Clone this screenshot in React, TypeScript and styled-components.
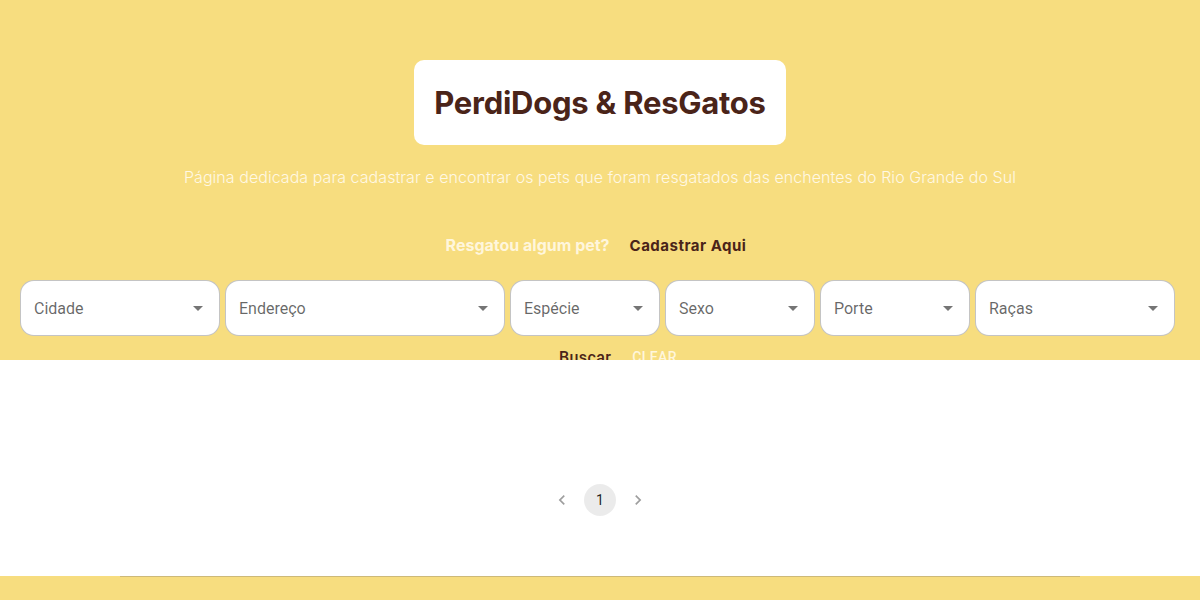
import React from "react";
import styled, { createGlobalStyle } from "styled-components";

const Global = createGlobalStyle`
  html, body { margin: 0; padding: 0; background: #fff; }
  body { font-family: Inter, "Noto Sans", sans-serif; }
  * { box-sizing: border-box; }
`;

const YELLOW = "#F7DD7F";
const BROWN = "#4A2419";
const CREAM = "#FFF6DC";

const Header = styled.header`
  background: ${YELLOW};
  height: 360px;
  overflow: hidden;
  padding-top: 60px;
  display: flex;
  flex-direction: column;
  align-items: center;
  & > * { flex-shrink: 0; }
`;

const TitleBox = styled.div`
  background: #fff;
  border-radius: 10px;
  height: 85px;
  padding: 0 20px;
  display: flex;
  align-items: center;
`;

const Title = styled.h1`
  margin: 0;
  font-family: Inter, sans-serif;
  font-weight: 700;
  font-size: 31px;
  color: ${BROWN};
  letter-spacing: -0.25px;
`;

const Subtitle = styled.p`
  margin: 20px 0 0;
  font-family: Inter, sans-serif;
  font-weight: 300;
  font-size: 16px;
  line-height: 24px;
  letter-spacing: 0.05px;
  color: #FFF8E4;
`;

const CtaRow = styled.div`
  margin-top: 38px;
  display: flex;
  align-items: center;
  gap: 12px;
  height: 36px;
`;

const CtaText = styled.span`
  font-family: Inter, sans-serif;
  font-weight: 700;
  font-size: 16px;
  color: ${CREAM};
`;

const TextButton = styled.button<{ $light?: boolean; $upper?: boolean }>`
  background: none;
  border: none;
  padding: 6px 8px;
  height: 36px;
  cursor: pointer;
  font-weight: 700;
  color: ${(p) => (p.$light ? CREAM : BROWN)};
  text-transform: ${(p) => (p.$upper ? "uppercase" : "none")};
`;

const CtaButton = styled(TextButton)`
  font-family: Inter, sans-serif;
  font-size: 15px;
  letter-spacing: 0.5px;
`;

const Filters = styled.div`
  margin-top: 17px;
  align-self: stretch;
  padding-left: 20px;
  display: flex;
  gap: 5px;
`;

const Select = styled.div<{ $w: number }>`
  width: ${(p) => p.$w}px;
  height: 56px;
  background: #fff;
  border: 1px solid rgba(0, 0, 0, 0.23);
  border-radius: 14px;
  display: flex;
  align-items: center;
  justify-content: space-between;
  padding: 0 9px 0 13px;
  font-family: Roboto, sans-serif;
  font-size: 16px;
  color: rgba(0, 0, 0, 0.6);
`;

const Arrow = styled.svg`
  width: 24px;
  height: 24px;
  fill: rgba(0, 0, 0, 0.54);
`;

const ActionRow = styled.div`
  margin-top: 3px;
  padding-left: 36px;
  display: flex;
  gap: 5px;
`;

const ActionButton = styled(TextButton)<{ $size: number }>`
  font-family: Roboto, sans-serif;
  font-size: ${(p) => p.$size}px;
  font-weight: 500;
  letter-spacing: 0.4px;
`;

const Main = styled.main`
  height: 216px;
  background: #fff;
  display: flex;
  justify-content: center;
  padding-top: 124px;
`;

const Pager = styled.nav`
  display: flex;
  gap: 6px;
  height: 32px;
`;

const PageItem = styled.div<{ $active?: boolean }>`
  width: 32px;
  height: 32px;
  border-radius: 16px;
  display: flex;
  align-items: center;
  justify-content: center;
  background: ${(p) => (p.$active ? "rgba(0,0,0,0.08)" : "transparent")};
  font-family: Roboto, sans-serif;
  font-size: 14px;
  color: rgba(0, 0, 0, 0.87);
`;

const Chevron = styled.svg`
  width: 20px;
  height: 20px;
  fill: rgba(0, 0, 0, 0.38);
`;

const Footer = styled.footer`
  background: ${YELLOW};
  height: 40px;
  display: flex;
  justify-content: center;
`;

const Divider = styled.hr`
  margin: 0;
  width: 80%;
  border: none;
  border-top: 1px solid #cdb978;
  height: 0;
`;

const selects: [string, number][] = [
  ["Cidade", 200],
  ["Endereço", 280],
  ["Espécie", 150],
  ["Sexo", 150],
  ["Porte", 150],
  ["Raças", 200],
];

export default function App() {
  return (
    <>
      <Global />
      <Header>
        <TitleBox>
          <Title>PerdiDogs &amp; ResGatos</Title>
        </TitleBox>
        <Subtitle>
          Página dedicada para cadastrar e encontrar os pets que foram resgatados das enchentes do Rio Grande do Sul
        </Subtitle>
        <CtaRow>
          <CtaText>Resgatou algum pet?</CtaText>
          <CtaButton>Cadastrar Aqui</CtaButton>
        </CtaRow>
        <Filters>
          {selects.map(([label, w]) => (
            <Select key={label} $w={w}>
              <span>{label}</span>
              <Arrow viewBox="0 0 24 24">
                <path d="M7 10l5 5 5-5z" />
              </Arrow>
            </Select>
          ))}
        </Filters>
        <ActionRow>
          <ActionButton $size={16}>Buscar</ActionButton>
          <ActionButton $size={14} $light $upper>Clear</ActionButton>
        </ActionRow>
      </Header>
      <Main>
        <Pager>
          <PageItem>
            <Chevron viewBox="0 0 24 24">
              <path d="M15.41 7.41 14 6l-6 6 6 6 1.41-1.41L10.83 12z" />
            </Chevron>
          </PageItem>
          <PageItem $active>1</PageItem>
          <PageItem>
            <Chevron viewBox="0 0 24 24">
              <path d="M10 6 8.59 7.41 13.17 12l-4.58 4.59L10 18l6-6z" />
            </Chevron>
          </PageItem>
        </Pager>
      </Main>
      <Footer>
        <Divider />
      </Footer>
    </>
  );
}
